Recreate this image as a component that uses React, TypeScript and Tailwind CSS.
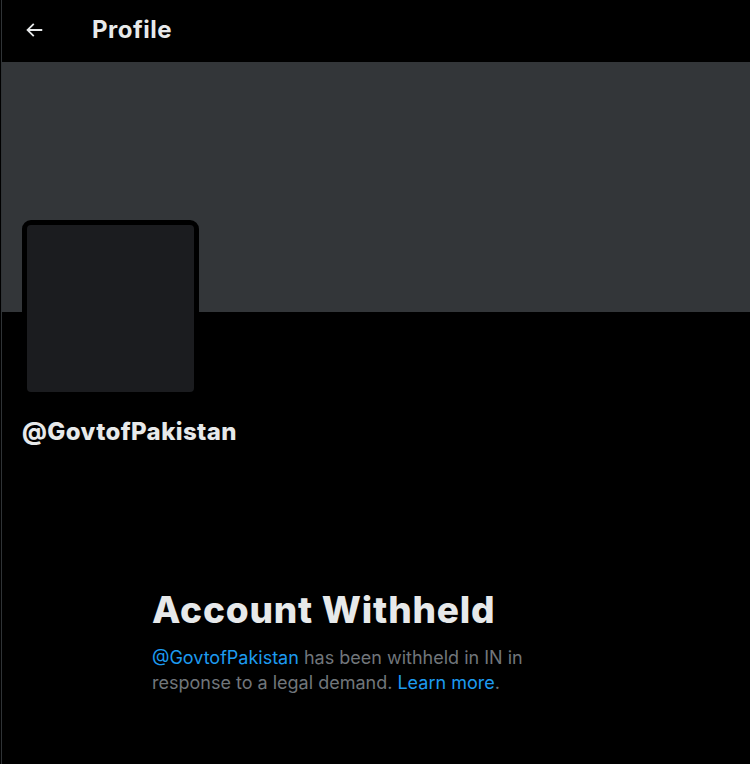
import React from 'react';

const font = { fontFamily: 'Inter, "Noto Sans", sans-serif' };

const BackArrow: React.FC = () => (
  <svg viewBox="0 0 24 24" className="h-[22px] w-[22px]" fill="currentColor">
    <path d="M7.414 13l5.043 5.04-1.414 1.42L3.586 12l7.457-7.46 1.414 1.42L7.414 11H21v2H7.414z" />
  </svg>
);

const App: React.FC = () => {
  return (
    <div className="min-h-[764px] w-[750px] bg-black" style={font}>
      <div className="ml-px min-h-[764px] border-l border-[#2f3336]">
        <div className="flex h-[62px] items-center pb-[3px]">
          <button className="ml-[20px] flex h-6 w-6 items-center justify-center text-[#e7e9ea]">
            <BackArrow />
          </button>
          <h1 className="ml-[46px] text-[24px] font-bold leading-[28px] tracking-[0.5px] text-[#e7e9ea]">Profile</h1>
        </div>

        <div className="h-[250px] bg-[#333639]" />

        <div className="px-[20px]">
          <div className="-mt-[92px] h-[177px] w-[177px] rounded-[9px] border-[5px] border-black bg-[#1b1c1f]" />
          <div className="mt-[22px] text-[24px] font-extrabold leading-[26px] tracking-[0.4px] text-[#e7e9ea]">
            @GovtofPakistan
          </div>
        </div>

        <div className="mx-auto mt-[145px] w-[448px]">
          <h2 className="text-[37px] font-extrabold leading-[40px] tracking-[0.8px] text-[#e7e9ea]">
            Account Withheld
          </h2>
          <p className="mt-[15px] w-[400px] text-[18px] leading-[25px] text-[#71767b]">
            <span className="text-[#1d9bf0]">@GovtofPakistan</span> has been withheld in IN in response to a legal demand.{' '}
            <span className="text-[#1d9bf0]">Learn more</span>.
          </p>
        </div>
      </div>
    </div>
  );
};

export default App;
